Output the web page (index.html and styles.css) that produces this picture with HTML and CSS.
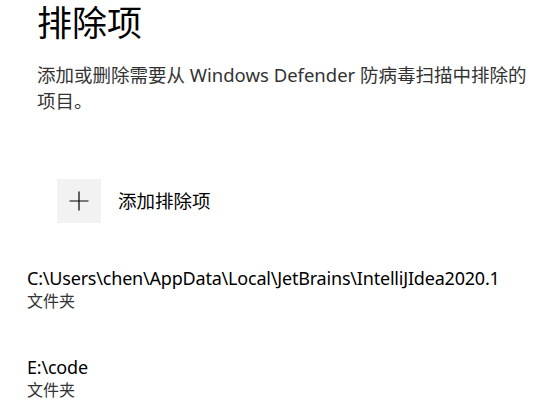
FILE: index.html
```html
<!DOCTYPE html>
<html lang="zh-CN">
<head>
<meta charset="utf-8">
<title>排除项</title>
<link rel="stylesheet" href="styles.css">
</head>
<body>
<main class="page">
  <header class="head">
    <h1 class="title">排除项</h1>
    <p class="desc">添加或删除需要从 Windows Defender 防病毒扫描中排除的项目。</p>
  </header>
  <div class="add-row">
    <button class="add-btn" type="button" aria-label="添加排除项">
      <svg width="20" height="20" viewBox="0 0 20 20" aria-hidden="true">
        <path d="M10 0.5V19.5M0.5 10H19.5" stroke="#000" stroke-width="1.2" fill="none"/>
      </svg>
    </button>
    <span class="add-label">添加排除项</span>
  </div>
  <ul class="items">
    <li class="item">
      <div class="item-path">C:\Users\chen\AppData\Local\JetBrains\IntelliJIdea2020.1</div>
      <div class="item-type">文件夹</div>
    </li>
    <li class="item">
      <div class="item-path">E:\code</div>
      <div class="item-type">文件夹</div>
    </li>
  </ul>
</main>
</body>
</html>
```

FILE: styles.css
```css
html, body {
  margin: 0;
  padding: 0;
  background: #ffffff;
}
body {
  font-family: "Noto Sans", "Noto Sans CJK SC", sans-serif;
  color: #000;
}
.page {
  padding: 0 0 0 27px;
}
.head {
  padding-left: 10px;
}
.title {
  margin: 0;
  font-family: "Noto Sans CJK SC", sans-serif;
  font-weight: 400;
  font-size: 35px;
  line-height: 42px;
  color: #000;
}
.desc {
  margin: 20px 0 0 0;
  width: 496px;
  font-size: 18.5px;
  line-height: 26px;
  color: #333;
}
.add-row {
  display: flex;
  align-items: center;
  gap: 17px;
  margin: 65px 0 0 30px;
}
.add-btn {
  width: 44px;
  height: 44px;
  padding: 0;
  border: 0;
  background: #f2f2f2;
  display: flex;
  align-items: center;
  justify-content: center;
}
.add-label {
  font-size: 18.5px;
  line-height: 26px;
  color: #000;
}
.items {
  list-style: none;
  margin: 44px 0 0 0;
  padding: 0;
  display: flex;
  flex-direction: column;
  gap: 43px;
}
.item-path {
  font-size: 18px;
  line-height: 23px;
  letter-spacing: -0.2px;
  color: #000;
}
.item-type {
  font-size: 16px;
  line-height: 23px;
  color: #333;
}
```
